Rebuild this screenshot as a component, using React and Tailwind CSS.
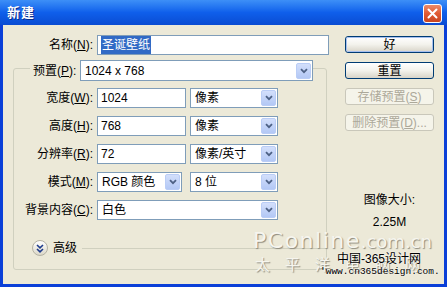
function U({ children }) {
  return <span className="underline underline-offset-[1px]">{children}</span>;
}

function Arrow() {
  return (
    <div className="w-[15px] h-[16px] mr-[1px] rounded-[2px] border border-[#BACDF6] bg-gradient-to-b from-[#D3DFFB] to-[#B3C8F5] flex items-center justify-center">
      <svg width="8" height="6" viewBox="0 0 8 6">
        <path d="M1 1.2 L4 4.2 L7 1.2" fill="none" stroke="#4D6185" strokeWidth="1.8" />
      </svg>
    </div>
  );
}

function Select({ className, children }) {
  return (
    <div className={"h-[20px] border border-[#7F9DB9] bg-white flex items-center " + className}>
      <span className="flex-1 pl-[4px] whitespace-nowrap">{children}</span>
      <Arrow />
    </div>
  );
}

function Input({ className, children }) {
  return (
    <div className={"h-[20px] border border-[#7F9DB9] bg-white flex items-center pl-[3px] " + className}>
      {children}
    </div>
  );
}

function Btn({ children, def, disabled }) {
  if (disabled) {
    return (
      <div className="w-[89px] h-[17px] rounded-[3px] border border-[#C9C7BA] bg-[#F5F4EA] text-[#ACA899] flex items-center justify-center whitespace-nowrap">
        {children}
      </div>
    );
  }
  return (
    <div className="w-[89px] h-[17px] rounded-[3px] border border-[#003C74] bg-gradient-to-b from-[#FFFFFF] via-[#F3F2EC] to-[#D8D4C8] flex items-center justify-center">
      <div
        className={
          "w-full h-full rounded-[2px] flex items-center justify-center " +
          (def ? "border border-[#A7C0EE]" : "")
        }
      >
        {children}
      </div>
    </div>
  );
}

export default function App() {
  return (
    <div className="relative w-[447px] h-[287px] overflow-hidden bg-[#0A3FD8] font-['Liberation_Sans','Noto_Sans_CJK_SC',sans-serif] text-[12px] text-black leading-none">
      {/* title bar */}
      <div className="h-[25px] flex items-center pl-[7px] pr-[5px] bg-gradient-to-b from-[#3D8FF7] via-[#0F5FEB] to-[#0A4CD2]">
        <span className="text-white font-bold text-[13px] tracking-[1px] [text-shadow:1px_1px_0_#0A2C8C]">新建</span>
        <div className="ml-auto mt-[2px] w-[19px] h-[19px] rounded-[3px] border border-white bg-gradient-to-b from-[#EB8A69] via-[#E05A32] to-[#C8441F] flex items-center justify-center">
          <svg width="11" height="11" viewBox="0 0 11 11">
            <path d="M1.5 1.5 L9.5 9.5 M9.5 1.5 L1.5 9.5" stroke="white" strokeWidth="2" strokeLinecap="round" />
          </svg>
        </div>
      </div>

      {/* body */}
      <div className="mx-[3px] h-[259px] bg-[#ECE9D8] flex">
        {/* left column */}
        <div className="w-[326px] flex flex-col">
          <div className="mt-[10px] flex items-center h-[20px]">
            <div className="w-[90px] text-right whitespace-nowrap">
              名称(<U>N</U>):
            </div>
            <Input className="ml-[4px] w-[232px] pl-[1px]">
              <span className="bg-[#316AC5] text-white px-[1px] py-[3px]">圣诞壁纸</span>
            </Input>
          </div>

          {/* group box */}
          <div className="mt-[13px] ml-[10px] w-[314px] h-[202px] border border-[#D0D0BF] rounded-[3px] flex flex-col">
            <div className="-mt-[9px] ml-[16px] self-start flex items-center bg-[#ECE9D8] pl-[3px]">
              <div className="w-[44px] whitespace-nowrap">
                预置(<U>P</U>):
              </div>
              <Select className="ml-[3px] w-[233px] h-[21px]">1024 x 768</Select>
            </div>

            <div className="mt-[7px] flex flex-col gap-[8px]">
              <div className="flex items-center h-[20px]">
                <div className="w-[79px] text-right whitespace-nowrap">
                  宽度(<U>W</U>):
                </div>
                <Input className="ml-[4px] w-[89px]">1024</Input>
                <Select className="ml-[4px] w-[88px]">像素</Select>
              </div>
              <div className="flex items-center h-[20px]">
                <div className="w-[79px] text-right whitespace-nowrap">
                  高度(<U>H</U>):
                </div>
                <Input className="ml-[4px] w-[89px]">768</Input>
                <Select className="ml-[4px] w-[88px]">像素</Select>
              </div>
              <div className="flex items-center h-[20px]">
                <div className="w-[79px] text-right whitespace-nowrap">
                  分辨率(<U>R</U>):
                </div>
                <Input className="ml-[4px] w-[89px]">72</Input>
                <Select className="ml-[4px] w-[88px]">像素/英寸</Select>
              </div>
              <div className="flex items-center h-[20px]">
                <div className="w-[79px] text-right whitespace-nowrap">
                  模式(<U>M</U>):
                </div>
                <Select className="ml-[4px] w-[85px]">RGB 颜色</Select>
                <Select className="ml-[8px] w-[88px]">8 位</Select>
              </div>
              <div className="flex items-center h-[20px]">
                <div className="w-[79px] text-right whitespace-nowrap">
                  背景内容(<U>C</U>):
                </div>
                <Select className="ml-[4px] w-[181px]">白色</Select>
              </div>
            </div>

            <div className="mt-[20px] flex items-center h-[16px]">
              <div className="ml-[18px] w-[16px] h-[16px] rounded-full border border-[#B5B2A4] bg-gradient-to-b from-[#FFFFFF] to-[#DCD8C8] flex items-center justify-center">
                <svg width="8" height="9" viewBox="0 0 8 9">
                  <path d="M1 1 L4 3.8 L7 1 M1 5 L4 7.8 L7 5" fill="none" stroke="#1F3C8C" strokeWidth="1.6" />
                </svg>
              </div>
              <span className="ml-[5px]">高级</span>
              <div className="ml-[5px] flex-1 h-px bg-[#D0D0BF]" />
            </div>
          </div>
        </div>

        {/* right column */}
        <div className="ml-[16px] pt-[11px] flex flex-col items-center">
          <div className="flex flex-col gap-[9px]">
            <Btn def>好</Btn>
            <Btn>重置</Btn>
            <Btn disabled>
              存储预置(<U>S</U>)
            </Btn>
            <Btn disabled>
              删除预置(<U>D</U>)...
            </Btn>
          </div>
          <div className="mt-[63px] whitespace-nowrap">图像大小:</div>
          <div className="mt-[10px]">2.25M</div>
        </div>
      </div>

      {/* watermark overlay */}
      <div className="absolute left-[253px] top-[230px] flex items-baseline font-['DejaVu_Sans',sans-serif] text-[#F6F5EE] [text-shadow:1px_1px_1px_#8E8B7E] pointer-events-none">
        <span className="text-[22px] tracking-[1.5px] leading-none">PConline</span>
        <span className="text-[18px] leading-none">.com.cn</span>
      </div>
      <div className="absolute left-[255px] top-[256px] text-[15px] tracking-[15px] whitespace-nowrap text-[#F6F5EE] [text-shadow:1px_1px_1px_#8E8B7E] font-['Noto_Sans_CJK_SC',sans-serif] leading-none">
        太平洋电脑网
      </div>
      <div className="absolute left-[337px] top-[253px] text-[12px] text-black whitespace-nowrap [text-shadow:0_0_2px_#ffffff] leading-none">
        中国-365设计网
      </div>
      <div className="absolute left-[320px] top-[267px] text-[9.5px] text-black whitespace-nowrap font-['Liberation_Mono',monospace] leading-none [text-shadow:0_0_2px_#ffffff]">
        'www.cn365design.com.
      </div>
    </div>
  );
}
